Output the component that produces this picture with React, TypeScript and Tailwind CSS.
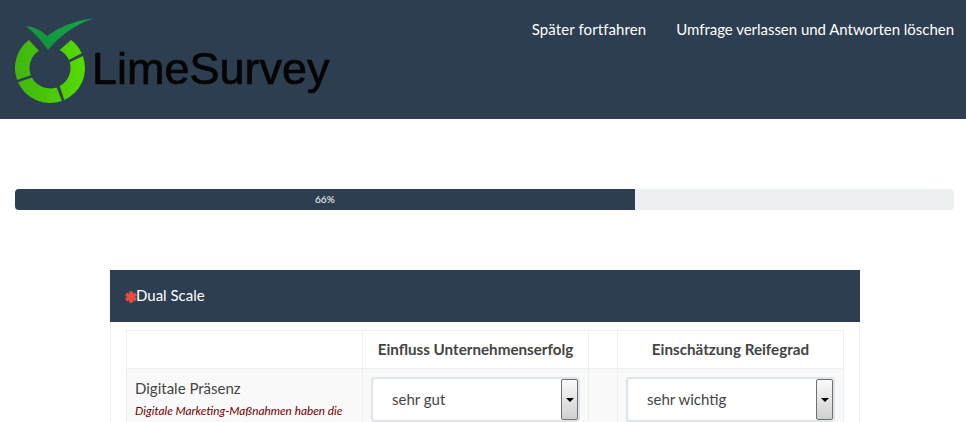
import React from 'react';

const CX = 50;
const CY = 68;

// one piece of the logo ring, angles in degrees, clockwise from east
const ringSegment = (from: number, to: number, fromIn: number, toIn: number) => {
  const pt = (r: number, a: number) => {
    const rad = (a * Math.PI) / 180;
    return `${(CX + r * Math.cos(rad)).toFixed(2)} ${(CY + r * Math.sin(rad)).toFixed(2)}`;
  };
  return `M${pt(35, from)} A35 35 0 0 1 ${pt(35, to)} L${pt(20.5, toIn)} A20.5 20.5 0 0 0 ${pt(20.5, fromIn)} Z`;
};

const Logo = () => (
  <div className="relative h-[119px] w-[340px] shrink-0 blur-[0.4px]">
    <svg width="100" height="110" viewBox="0 0 100 110" className="absolute left-0 top-0">
      <defs>
        <linearGradient id="ring" gradientUnits="userSpaceOnUse" x1="15" y1="68" x2="85" y2="68">
          <stop offset="0" stopColor="#3fb50f" />
          <stop offset="1" stopColor="#55dc00" />
        </linearGradient>
        <linearGradient id="tick" x1="0" y1="1" x2="1" y2="0">
          <stop offset="0" stopColor="#118f37" />
          <stop offset="1" stopColor="#13a84b" />
        </linearGradient>
      </defs>
      <path fill="url(#ring)" d={ringSegment(160, 233, 159, 237)} />
      <path fill="url(#ring)" d={ringSegment(70, 156, 71, 152)} />
      <path fill="url(#ring)" d={ringSegment(-20, 66, -16, 62)} />
      <path fill="url(#ring)" d={ringSegment(-53, -25, -62, -23)} />
      <path fill="url(#tick)" d="M26 26 Q38 27 47 36 Q66 22 94 18 Q66 28 48 50 Q40 38 26 26 Z" />
    </svg>
    <span className="absolute left-[92px] top-[43px] font-['Liberation_Sans',sans-serif] text-[45px] leading-[52px] text-[#050505] [-webkit-text-stroke:0.7px_#050505]">
      LimeSurvey
    </span>
  </div>
);

const FakeSelect = ({ value }: { value: string }) => (
  <div className="flex h-[45px] items-center justify-between rounded-[4px] border-2 border-[#dce4ec] bg-white pl-[19px]">
    <span className="-mt-[1px] text-[15px] text-[#444]">{value}</span>
    <span className="flex h-[41px] w-[17px] items-center justify-center rounded-[2px] border border-[#707070] bg-gradient-to-b from-[#fafafa] to-[#d0d0d0]">
      <span className="h-0 w-0 border-x-[4px] border-t-[4px] border-x-transparent border-t-black" />
    </span>
  </div>
);

export default function App() {
  return (
    <div className="h-[422px] overflow-hidden bg-white font-['Lato',sans-serif] text-[#444]">
      <div className="w-[969px]">
        {/* Navbar */}
        <div className="flex h-[119px] justify-between bg-[#2c3e50] pr-[15px]">
          <Logo />
          <div className="flex gap-[30px] pt-[19px] text-[15px] leading-[21px] text-white">
            <a className="tracking-[0.1px]">Später fortfahren</a>
            <a className="tracking-[-0.03px]">Umfrage verlassen und Antworten löschen</a>
          </div>
        </div>

        {/* Progress */}
        <div className="mx-[15px] mt-[70px] h-[21px] overflow-hidden rounded-[4px] bg-[#ecf0f1]">
          <div className="h-full w-[66%] bg-[#2c3e50] text-center text-[10px] leading-[20px] text-white">66%</div>
        </div>

        {/* Question panel */}
        <div className="ml-[110px] mt-[60px] w-[750px] border-x border-[#ecf0f1]">
          <div className="-mx-px flex h-[52px] items-center bg-[#2c3e50] pl-[15px] text-[15px] text-white">
            <svg width="12" height="12" viewBox="0 0 12 12" className="-mr-[1px] mt-[1px]">
              <g stroke="#e74c3c" strokeWidth="3.8">
                <line x1="6" y1="0.3" x2="6" y2="11.7" />
                <line x1="1" y1="3.1" x2="11" y2="8.9" />
                <line x1="11" y1="3.1" x2="1" y2="8.9" />
              </g>
            </svg>
            <span className="-mt-[1px]">Dual Scale</span>
          </div>
          <div className="pl-[15px] pr-[16px] pt-2">
            <table className="w-full table-fixed border-collapse">
              <colgroup>
                <col className="w-[236px]" />
                <col className="w-[226px]" />
                <col className="w-[29px]" />
                <col className="w-[226px]" />
              </colgroup>
              <thead>
                <tr className="h-[38px] text-[15.2px] font-bold">
                  <th className="border border-[#ecf0f1]" />
                  <th className="border border-[#ecf0f1]">Einfluss Unternehmenserfolg</th>
                  <th className="border border-[#ecf0f1]" />
                  <th className="border border-[#ecf0f1]">Einschätzung Reifegrad</th>
                </tr>
              </thead>
              <tbody>
                <tr className="bg-[#f9f9f9] align-top">
                  <td className="border border-[#ecf0f1] px-2 pt-[8px]">
                    <div className="text-[15px] leading-[23px]">Digitale Präsenz</div>
                    <div className="mt-[3px] text-[11.8px] italic leading-[16px] text-[#700000]">
                      Digitale Marketing-Maßnahmen haben die
                    </div>
                  </td>
                  <td className="border border-[#ecf0f1] px-2 pt-2">
                    <FakeSelect value="sehr gut" />
                  </td>
                  <td className="border border-[#ecf0f1]" />
                  <td className="border border-[#ecf0f1] px-2 pt-2">
                    <FakeSelect value="sehr wichtig" />
                  </td>
                </tr>
              </tbody>
            </table>
          </div>
        </div>
      </div>
    </div>
  );
}
